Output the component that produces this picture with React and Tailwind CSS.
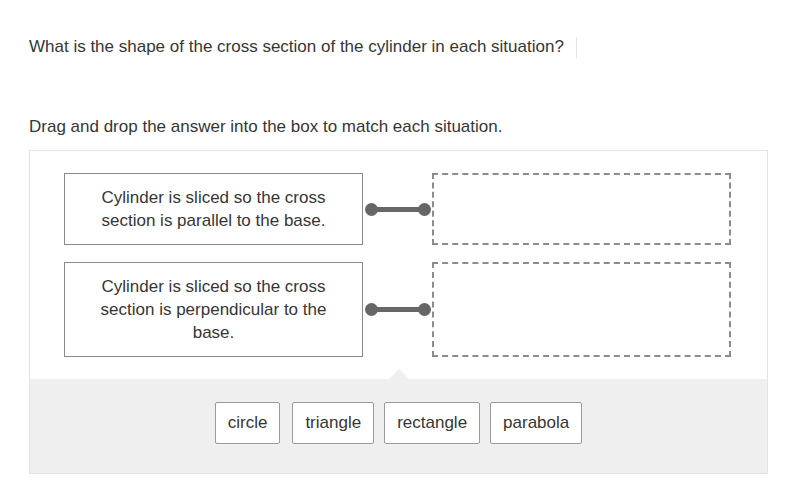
export default function App() {
  const rows = [
    { text: 'Cylinder is sliced so the cross section is parallel to the base.', w: 'w-[250px]' },
    { text: 'Cylinder is sliced so the cross section is perpendicular to the base.', w: 'w-[250px]' },
  ]
  const answers = ['circle', 'triangle', 'rectangle', 'parabola']

  return (
    <div className="w-[797px] h-[481px] bg-white text-[#363636] text-[17px] font-['Liberation_Sans',Arial,sans-serif]">
      <div className="pl-[29px] pt-[35px] flex items-center h-[59px]">
        <span className="leading-6">What is the shape of the cross section of the cylinder in each situation?</span>
        <span className="ml-[12px] w-px h-[21px] bg-[#e4e4e4]" />
      </div>

      <p className="pl-[29px] mt-[56px] leading-6">Drag and drop the answer into the box to match each situation.</p>

      <div className="ml-[29px] mt-[11px] w-[739px] border border-[#e3e3e3]">
        <div className="relative pl-[34px] pr-[35px] pt-[22px] pb-[22px] flex flex-col gap-[17px]">
          {rows.map((r, i) => (
            <div key={i} className="flex items-center">
              <div className="w-[299px] border border-[#8a8a8a] py-[12px] flex justify-center">
                <p className={`${r.w} text-center leading-[23px]`}>{r.text}</p>
              </div>
              <div className="relative w-[69px] h-[14px] flex items-center">
                <span className="absolute left-[2px] w-[13px] h-[13px] rounded-full bg-[#666]" />
                <span className="absolute left-[8px] right-[8px] h-[5px] bg-[#666]" />
                <span className="absolute right-[1px] w-[13px] h-[13px] rounded-full bg-[#666]" />
              </div>
              <div className="w-[299px] self-stretch border-2 border-dashed border-[#8c8c8c]" />
            </div>
          ))}
          <span className="absolute left-[359px] bottom-0 w-0 h-0 border-l-[10px] border-r-[10px] border-b-[10px] border-l-transparent border-r-transparent border-b-[#efefef]" />
        </div>
        <div className="bg-[#efefef] h-[94px] pt-[23px] flex justify-center gap-[10px]">
          {answers.map((a, i) => (
            <div key={a} className={`h-[42px] px-[12px] ${i === 1 ? 'ml-[2px]' : ''} flex items-center bg-white border border-[#9a9a9a] rounded-[2px]`}>
              {a}
            </div>
          ))}
        </div>
      </div>
    </div>
  )
}
